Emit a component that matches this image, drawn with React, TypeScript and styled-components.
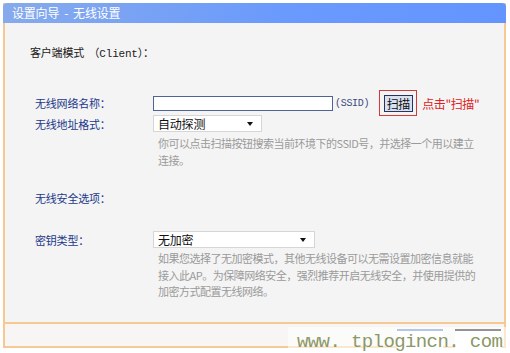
import styled, { createGlobalStyle } from "styled-components";

const GlobalStyle = createGlobalStyle`
  html, body {
    margin: 0;
    padding: 0;
    background: #ffffff;
  }
  body {
    font-family: "Noto Sans CJK SC", "Liberation Sans", sans-serif;
    font-size: 11px;
    letter-spacing: -0.2px;
    color: #222;
  }
`;

const Page = styled.div`
  position: relative;
  width: 510px;
  height: 353px;
  overflow: hidden;
  padding: 3px 0 0 3px;
  box-sizing: border-box;
`;

const Frame = styled.div`
  width: 503px;
  box-sizing: border-box;
  border: 2px solid #f6c892;
  border-top: none;
  background: #f4f4f4;
`;

const TitleBar = styled.div`
  height: 20px;
  margin: 0 -2px;
  padding-left: 9px;
  border-radius: 4px 4px 0 0;
  background: linear-gradient(to right, #86aaec, #6a9afc 55%, #6495ff);
  color: #ffffff;
  font-size: 12px;
  line-height: 20px;
  white-space: pre;
`;

const Body = styled.div`
  height: 301px;
  box-sizing: border-box;
  padding: 21px 0 0 0;
  border-bottom: 2px solid #f6c892;
`;

const Heading = styled.div`
  padding-left: 25px;
  line-height: 16px;
  color: #1a1a1a;
`;

const Mono = styled.span`
  font-family: "Liberation Mono", monospace;
  font-size: 11px;
`;

const Row = styled.div<{ $top: number; $height: number }>`
  display: grid;
  grid-template-columns: 118px auto;
  align-items: center;
  height: ${(p) => p.$height}px;
  margin-top: ${(p) => p.$top}px;
  padding-left: 30px;
`;

const Label = styled.div`
  color: #1c378a;
`;

const Field = styled.div`
  display: flex;
  align-items: center;
`;

const TextInput = styled.div`
  width: 180px;
  height: 15px;
  box-sizing: border-box;
  border: 1px solid #4d6494;
  background: #ffffff;
`;

const Ssid = styled.span`
  margin-left: 2px;
  font-family: "Liberation Mono", monospace;
  font-size: 10px;
  color: #3a4a7a;
  letter-spacing: -0.3px;
`;

const ScanFrame = styled.div`
  width: 38px;
  height: 26px;
  box-sizing: border-box;
  margin-left: 10px;
  border: 1px solid #d23b3b;
  display: flex;
  align-items: center;
  justify-content: center;
`;

const ScanButton = styled.div`
  width: 29px;
  height: 17px;
  box-sizing: border-box;
  border: 1px solid #26345e;
  background: #d9e0f0;
  color: #111;
  font-size: 12px;
  line-height: 15px;
  text-align: center;
  letter-spacing: -0.5px;
`;

const Hint = styled.span`
  margin-left: 5px;
  color: #e0201e;
  font-size: 12px;
  letter-spacing: -0.4px;
`;

const Select = styled.div<{ $width: number }>`
  position: relative;
  width: ${(p) => p.$width}px;
  height: 17px;
  box-sizing: border-box;
  border: 1px solid #d6d6d6;
  background: #ffffff;
  padding-left: 4px;
  line-height: 15px;
  color: #111;
  font-size: 12px;
  &::after {
    content: "";
    position: absolute;
    right: 8px;
    top: 6px;
    border-left: 3px solid transparent;
    border-right: 3px solid transparent;
    border-top: 4px solid #111;
  }
`;

const Help = styled.div<{ $top: number; $line: number }>`
  margin: ${(p) => p.$top}px 0 0 153px;
  color: #9a9a9a;
  line-height: ${(p) => p.$line}px;
  font-size: 11px;
  white-space: nowrap;
  letter-spacing: -0.5px;
`;

const Section = styled.div<{ $top: number }>`
  margin-top: ${(p) => p.$top}px;
  padding-left: 30px;
  line-height: 16px;
  color: #1c378a;
`;

const Footer = styled.div`
  height: 22px;
  display: flex;
  justify-content: flex-end;
  align-items: flex-start;
  gap: 12px;
  padding: 5px 3px 0 0;
  box-sizing: border-box;
  background: #f7f6f4;
`;

const FooterButton = styled.div<{ $edge: string }>`
  width: 46px;
  height: 20px;
  box-sizing: border-box;
  border-top: 2px solid ${(p) => p.$edge};
  background: #ffffff;
`;

const Watermark = styled.div`
  position: absolute;
  left: 288px;
  top: 327px;
  width: 222px;
  height: 26px;
  padding-left: 9px;
  box-sizing: border-box;
  background: rgba(255, 255, 255, 0.55);
  font-family: "Liberation Mono", "DejaVu Sans Mono", monospace;
  font-size: 19px;
  line-height: 31px;
  color: #8b9868;
  letter-spacing: -0.6px;
  white-space: nowrap;
`;

export default function App() {
  return (
    <Page>
      <GlobalStyle />
      <Frame>
        <TitleBar>设置向导  -  无线设置</TitleBar>
        <Body>
          <Heading>
            客户端模式 &nbsp;（<Mono>Client</Mono>）：
          </Heading>
          <Row $top={28} $height={25}>
            <Label>无线网络名称：</Label>
            <Field>
              <TextInput />
              <Ssid>(SSID)</Ssid>
              <ScanFrame>
                <ScanButton>扫描</ScanButton>
              </ScanFrame>
              <Hint>点击"扫描"</Hint>
            </Field>
          </Row>
          <Row $top={0} $height={17}>
            <Label>无线地址格式：</Label>
            <Field>
              <Select $width={109}>自动探测</Select>
            </Field>
          </Row>
          <Help $top={3} $line={17}>
            你可以点击扫描按钮搜索当前环境下的SSID号，并选择一个用以建立
            <br />
            连接。
          </Help>
          <Section $top={21}>无线安全选项：</Section>
          <Row $top={25} $height={17}>
            <Label>密钥类型：</Label>
            <Field>
              <Select $width={162}>无加密</Select>
            </Field>
          </Row>
          <Help $top={2} $line={16.5}>
            如果您选择了无加密模式，其他无线设备可以无需设置加密信息就能
            <br />
            接入此AP。为保障网络安全，强烈推荐开启无线安全，并使用提供的
            <br />
            加密方式配置无线网络。
          </Help>
        </Body>
        <Footer>
          <FooterButton $edge="#5b7fd0" />
          <FooterButton $edge="#111111" />
        </Footer>
      </Frame>
      <Watermark>www. tplogincn. com</Watermark>
    </Page>
  );
}
